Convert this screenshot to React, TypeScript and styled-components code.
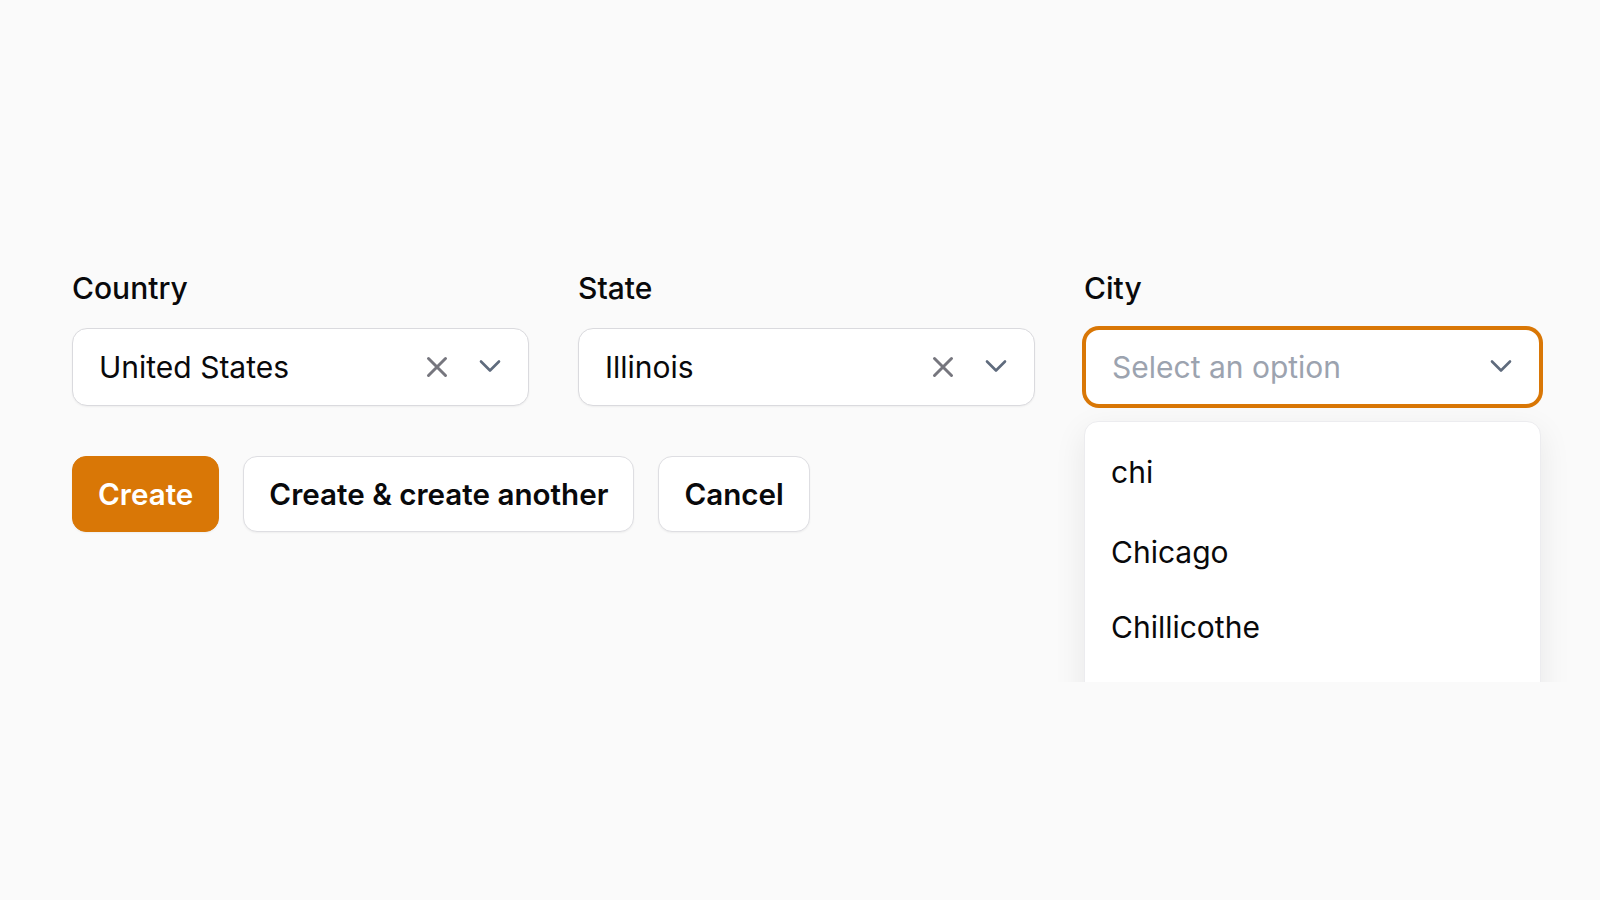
import styled, { createGlobalStyle } from "styled-components";

const GlobalStyle = createGlobalStyle`
  html, body {
    margin: 0;
    background: #fafafa;
  }
  body {
    font-family: Inter, "Noto Sans", sans-serif;
    color: #09090b;
    -webkit-font-smoothing: antialiased;
  }
  * {
    box-sizing: border-box;
  }
`;

const Page = styled.main`
  height: 682px;
  overflow: hidden;
  padding: 270px 59px 0 72px;
`;

const FieldGrid = styled.div`
  display: grid;
  grid-template-columns: repeat(3, 1fr);
  column-gap: 49px;
`;

const Field = styled.div`
  position: relative;
  display: flex;
  flex-direction: column;
  gap: 22px;
`;

const Label = styled.label`
  font-size: 30px;
  line-height: 36px;
  font-weight: 500;
  color: #09090b;
`;

const SelectBox = styled.div<{ $focused?: boolean }>`
  height: 78px;
  display: flex;
  align-items: center;
  padding: 0 27px 0 26px;
  background: #fff;
  border: ${(p) => (p.$focused ? "2px solid #d97706" : "1.5px solid #dadade")};
  border-radius: 15px;
  box-shadow: ${(p) =>
    p.$focused ? "0 0 0 2px #d97706" : "0 1px 2px rgba(0, 0, 0, 0.05)"};
`;

const Value = styled.span<{ $placeholder?: boolean }>`
  flex: 1;
  font-size: 30px;
  color: ${(p) => (p.$placeholder ? "#9ca3af" : "#09090b")};
  white-space: nowrap;
`;

const IconSlot = styled.span<{ $gap?: number }>`
  display: flex;
  width: 22px;
  height: 22px;
  margin-right: ${(p) => p.$gap ?? 0}px;
  flex-shrink: 0;
`;

const Dropdown = styled.div`
  position: absolute;
  top: calc(100% + 15px);
  left: 0;
  right: 0;
  min-height: 320px;
  background: #fff;
  border: 1.5px solid #ececef;
  border-radius: 14px;
  box-shadow: 0 10px 32px rgba(0, 0, 0, 0.08);
  z-index: 10;
`;

const SearchInput = styled.input`
  display: block;
  width: 100%;
  padding: 32px 26px 24px;
  border: none;
  outline: none;
  background: transparent;
  font-family: inherit;
  font-size: 30px;
  line-height: 36px;
  color: #09090b;
`;

const OptionList = styled.ul`
  list-style: none;
  margin: 0;
  padding: 0;
`;

const Option = styled.li`
  padding: 19.5px 26px;
  font-size: 30px;
  line-height: 36px;
  color: #09090b;
`;

const Actions = styled.div`
  display: flex;
  gap: 24px;
  margin-top: 50px;
`;

const Button = styled.button<{ $primary?: boolean }>`
  height: 76px;
  padding: 0 25px;
  font-family: inherit;
  font-size: 29.6px;
  font-weight: 600;
  border-radius: 14px;
  cursor: pointer;
  background: ${(p) => (p.$primary ? "#d97706" : "#fff")};
  color: ${(p) => (p.$primary ? "#fff" : "#09090b")};
  border: 1.5px solid ${(p) => (p.$primary ? "#d97706" : "#dedee2")};
  box-shadow: 0 1px 2px rgba(0, 0, 0, 0.05);
`;

const ClearIcon = () => (
  <svg width="22" height="22" viewBox="0 0 22 22" fill="none">
    <path
      d="M2.5 2.5l17 17M19.5 2.5l-17 17"
      stroke="#76767e"
      strokeWidth="3"
      strokeLinecap="round"
    />
  </svg>
);

const ChevronIcon = () => (
  <svg width="22" height="22" viewBox="0 0 22 22" fill="none">
    <path
      d="M2 5.5l9 9 9-9"
      stroke="#5f6b7d"
      strokeWidth="2.6"
      strokeLinecap="round"
      strokeLinejoin="round"
    />
  </svg>
);

interface SelectFieldProps {
  label: string;
  value?: string;
  focused?: boolean;
  children?: React.ReactNode;
}

const SelectField = ({ label, value, focused, children }: SelectFieldProps) => (
  <Field>
    <Label>{label}</Label>
    <SelectBox $focused={focused}>
      <Value $placeholder={!value}>{value ?? "Select an option"}</Value>
      {value && (
        <IconSlot $gap={31}>
          <ClearIcon />
        </IconSlot>
      )}
      <IconSlot>
        <ChevronIcon />
      </IconSlot>
    </SelectBox>
    {children}
  </Field>
);

const cities = ["Chicago", "Chillicothe"];

export default function App() {
  return (
    <>
      <GlobalStyle />
      <Page>
        <FieldGrid>
          <SelectField label="Country" value="United States" />
          <SelectField label="State" value="Illinois" />
          <SelectField label="City" focused>
            <Dropdown>
              <SearchInput readOnly value="chi" />
              <OptionList>
                {cities.map((c) => (
                  <Option key={c}>{c}</Option>
                ))}
              </OptionList>
            </Dropdown>
          </SelectField>
        </FieldGrid>
        <Actions>
          <Button $primary>Create</Button>
          <Button>Create &amp; create another</Button>
          <Button>Cancel</Button>
        </Actions>
      </Page>
    </>
  );
}
